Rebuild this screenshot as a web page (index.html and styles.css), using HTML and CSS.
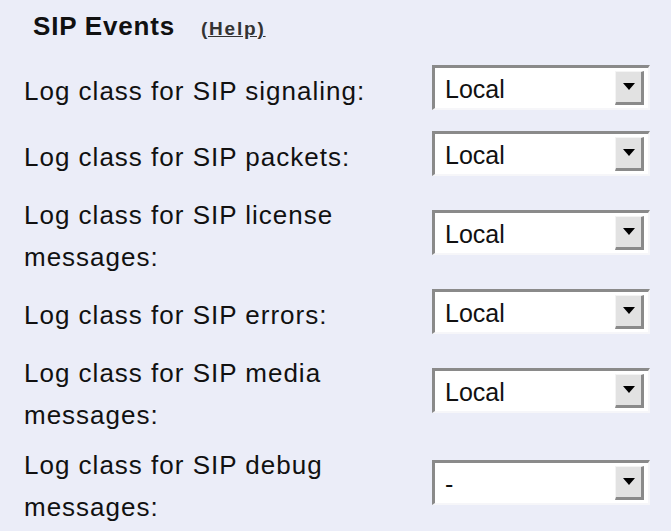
FILE: index.html
```html
<!DOCTYPE html>
<html>
<head>
<meta charset="utf-8">
<title>SIP Events</title>
<link rel="stylesheet" href="styles.css">
</head>
<body>
<div class="panel">
  <div class="heading">
    <span class="title">SIP Events</span>
    <a class="help" href="#">(Help)</a>
  </div>
  <div class="rows">
    <div class="row">
      <label class="label">Log class for SIP signaling:</label>
      <span class="combo"><select class="select"><option>Local</option></select><span class="btn"><span class="arrow"></span></span></span>
    </div>
    <div class="row">
      <label class="label">Log class for SIP packets:</label>
      <span class="combo"><select class="select"><option>Local</option></select><span class="btn"><span class="arrow"></span></span></span>
    </div>
    <div class="row">
      <label class="label">Log class for SIP license<br>messages:</label>
      <span class="combo"><select class="select"><option>Local</option></select><span class="btn"><span class="arrow"></span></span></span>
    </div>
    <div class="row">
      <label class="label">Log class for SIP errors:</label>
      <span class="combo"><select class="select"><option>Local</option></select><span class="btn"><span class="arrow"></span></span></span>
    </div>
    <div class="row">
      <label class="label">Log class for SIP media<br>messages:</label>
      <span class="combo"><select class="select"><option>Local</option></select><span class="btn"><span class="arrow"></span></span></span>
    </div>
    <div class="row">
      <label class="label">Log class for SIP debug<br>messages:</label>
      <span class="combo"><select class="select"><option>-</option></select><span class="btn"><span class="arrow"></span></span></span>
    </div>
  </div>
</div>
</body>
</html>
```
FILE: styles.css
```css
html, body {
  margin: 0;
  padding: 0;
  background: #ebedf8;
}
body {
  font-family: "Liberation Sans", Arial, sans-serif;
  color: #111;
}
.panel {
  padding-left: 24px;
}
.heading {
  display: flex;
  align-items: baseline;
  gap: 26px;
  padding-top: 11px;
  padding-left: 9px;
  height: 30px;
  line-height: 30px;
  margin-bottom: 13px;
}
.title {
  font-weight: bold;
  font-size: 26px;
  letter-spacing: 0.8px;
}
.help {
  font-weight: bold;
  font-size: 19px;
  letter-spacing: 1.8px;
  color: #333;
  text-decoration: underline;
}
.rows {
  display: flex;
  flex-direction: column;
}
.row {
  display: flex;
  align-items: center;
  min-height: 66px;
}
.label {
  width: 408px;
  box-sizing: border-box;
  padding-top: 8px;
  font-size: 26px;
  line-height: 42px;
  letter-spacing: 1px;
}
.combo {
  position: relative;
  display: block;
  width: 218px;
  height: 45px;
}
.select {
  appearance: none;
  -webkit-appearance: none;
  display: block;
  width: 218px;
  height: 45px;
  box-sizing: border-box;
  margin: 0;
  border-top: 3px solid #8a8a8a;
  border-left: 3px solid #8a8a8a;
  border-right: 2px solid #f6f6f9;
  border-bottom: 2px solid #f6f6f9;
  border-radius: 0;
  background: #fff;
  padding: 2px 40px 0 10px;
  font-family: "Liberation Sans", Arial, sans-serif;
  font-size: 25px;
  color: #111;
  outline: none;
}
.btn {
  position: absolute;
  right: 6px;
  top: 6px;
  width: 29px;
  height: 34px;
  box-sizing: border-box;
  background: #e2e2e2;
  border-top: 1px solid #f4f4f4;
  border-left: 1px solid #f4f4f4;
  border-right: 3px solid #8a8a8a;
  border-bottom: 3px solid #8a8a8a;
  display: flex;
  align-items: center;
  justify-content: center;
  pointer-events: none;
}
.arrow {
  width: 0;
  height: 0;
  border-left: 6px solid transparent;
  border-right: 6px solid transparent;
  border-top: 7px solid #000;
  margin-left: 1px;
}
```
